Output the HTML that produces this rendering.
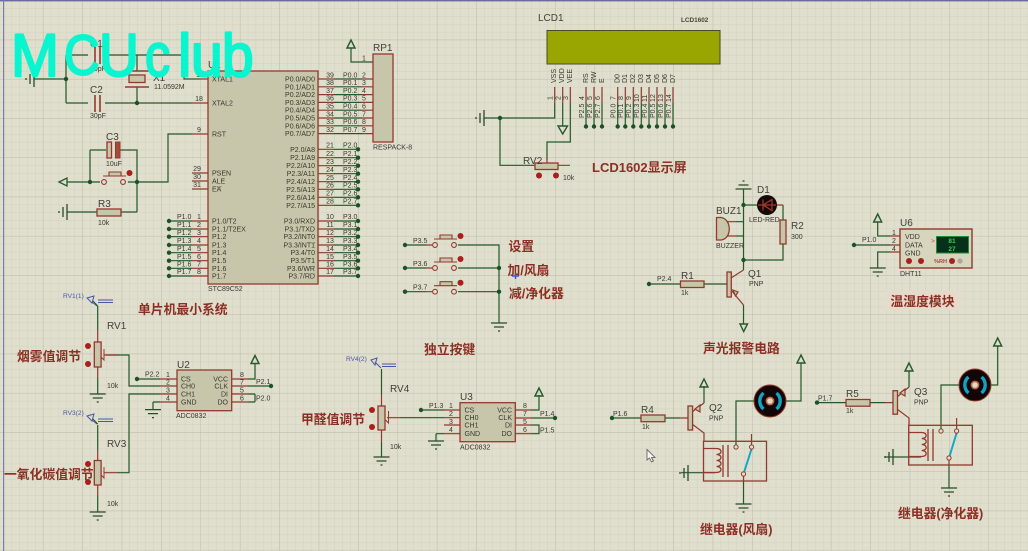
<!DOCTYPE html>
<html><head><meta charset="utf-8"><style>
html,body{margin:0;padding:0;background:#e0dfcd;overflow:hidden}
svg{display:block;filter:blur(.35px)}
text{font-family:"Liberation Sans","Noto Sans CJK SC",sans-serif}
.t{font-size:7px;fill:#38382f}
.r{font-size:10px;fill:#414138}
.m{text-anchor:middle}
.e{text-anchor:end}
.z{font-size:12.8px;font-weight:700;fill:#8c2f24}
.b{font-size:6.6px;fill:#4a55a8}
.w{fill:none;stroke:#24592a;stroke-width:1.2}
.p{fill:none;stroke:#93392e;stroke-width:1.2}
.c{fill:#c8c6aa;stroke:#93392e;stroke-width:1.3}
.k{font-family:"Liberation Sans",sans-serif;font-size:60px;fill:#08f5cf;stroke:#08f5cf;stroke-width:2.2;stroke-linejoin:round}
</style></head><body>
<svg width="1028" height="551" viewBox="0 0 1028 551" xmlns="http://www.w3.org/2000/svg">
<defs>
<pattern id="g1" width="7.88" height="7.85" patternUnits="userSpaceOnUse" x="3.5" y="0.5"><path d="M0 0V8M0 0H8" stroke="#d2d1bf" stroke-width="1" fill="none"/></pattern>
<pattern id="g2" width="39.4" height="39.25" patternUnits="userSpaceOnUse" x="3.5" y="0.4"><path d="M0 0V40M0 0H40" stroke="#bfbeac" stroke-width="1" fill="none"/></pattern>
<g id="gnd"><path d="M-8 0H8M-5 4H5M-1 8H1" stroke="#2a4a2c" stroke-width="1.3" fill="none"/></g>
<g id="gl"><path d="M0 -8V8M-4 -5V5M-8 -1V1" stroke="#2a4a2c" stroke-width="1.3" fill="none"/></g>
<circle id="d" r="2.2" fill="#1b5226"/>
<circle id="rd" r="3" fill="#a81f1c"/>
<path id="up" d="M-4 8L0 0L4 8Z" fill="none" stroke="#24592a" stroke-width="1.4"/>
<g id="mot"><circle r="16" fill="#140606" stroke="#93392e" stroke-width="1"/><path d="M-6.5 -8A10.5 10.5 0 0 0 -6.5 8M6.5 -8A10.5 10.5 0 0 1 6.5 8" fill="none" stroke="#0fa4c4" stroke-width="3.4"/><circle r="3.6" fill="#e3d9c4" stroke="#b86a4c" stroke-width="1.6"/></g>
<g id="coil"><path d="M0 0H13C19 0 19 6 13 6C19 6 19 12 13 12C19 12 19 18 13 18C19 18 19 24 13 24H0" fill="none" stroke="#93392e" stroke-width="1.3"/></g>
<g id="sw"><path d="M2 -6H25M8 -6V-10H20V-6" fill="#c8c6aa" stroke="#93392e" stroke-width="1.1"/><circle cx="3" cy="0" r="2.4" fill="#e0dfcd" stroke="#93392e" stroke-width="1.1"/><circle cx="22" cy="0" r="2.4" fill="#e0dfcd" stroke="#93392e" stroke-width="1.1"/><circle cx="28.5" cy="-9" r="3" fill="#a81f1c"/></g>
</defs>
<rect width="1028" height="551" fill="#e0dfcd"/>
<rect width="1028" height="551" fill="url(#g1)"/>
<rect width="1028" height="551" fill="url(#g2)"/>
<rect x="0" y="0" width="1028" height="1.4" fill="#6a6a9c"/>
<rect x="3" y="0" width="1.2" height="551" fill="#7c7cb0"/>

<!-- Crystal / reset -->
<path class="w" d="M34 79H66M66 55V103M66 55H88M105 55H184V79H200M66 103H88M105 103H192M137 55V71M137 87V103M90 150V182M90 150H106M120 150H137V212M67 182H100M128 182H168V134H192M67 212H97M121 212H137"/>
<path class="p" d="M200 79H208M192 103H208M192 134H208M192 173H208M192 181H208M192 189H208"/>
<path d="M95 47V64M100 47V64M95 95V112M100 95V112" stroke="#93392e" stroke-width="1.6" fill="none"/>
<path d="M125 71H149M125 87H149" stroke="#93392e" stroke-width="1.5" fill="none"/>
<rect class="c" x="129" y="75" width="16" height="7.5"/>
<rect class="c" x="107" y="142" width="4.5" height="16"/>
<rect x="115.5" y="142" width="4.5" height="16" fill="#a84a38" stroke="#93392e"/>
<path d="M59 182L67 178V186Z" fill="none" stroke="#24592a" stroke-width="1.3"/>
<use href="#gl" transform="translate(34 79)"/><use href="#gl" transform="translate(67 212)"/>
<use href="#d" x="66" y="79"/><use href="#d" x="137" y="103"/><use href="#d" x="90" y="182"/><use href="#d" x="137" y="182"/>
<use href="#sw" x="101" y="182"/>
<rect class="c" x="97" y="209" width="24" height="7"/>
<text class="r" x="90" y="47">C1</text><text class="t" x="90" y="71">30pF</text>
<text class="r" x="90" y="93">C2</text><text class="t" x="90" y="118">30pF</text>
<text class="r" x="153" y="81">X1</text><text class="t" x="154" y="89">11.0592M</text>
<text class="r" x="106" y="140">C3</text><text class="t" x="106" y="166">10uF</text>
<text class="r" x="98" y="207">R3</text><text class="t" x="98" y="225">10k</text>

<!-- U1 pins -->
<path class="p" d="M318 79H334M318 86.8H334M318 94.6H334M318 102.4H334M318 110.2H334M318 118H334M318 125.8H334M318 133.6H334M318 149.3H334M318 157.7H334M318 165.7H334M318 173.7H334M318 181.7H334M318 189.3H334M318 197.3H334M318 205.3H334M318 221H334M318 229H334M318 236.7H334M318 245H334M318 252.7H334M318 260.7H334M318 268.3H334M318 276H334M192 221H208M192 229H208M192 236.7H208M192 245H208M192 252.7H208M192 260.7H208M192 268.3H208M192 276H208M362 79H373M362 86.8H373M362 94.6H373M362 102.4H373M362 110.2H373M362 118H373M362 125.8H373M362 133.6H373"/>
<path class="w" d="M334 79H362M334 86.8H362M334 94.6H362M334 102.4H362M334 110.2H362M334 118H362M334 125.8H362M334 133.6H362M334 149.3H358M334 157.7H358M334 165.7H358M334 173.7H358M334 181.7H358M334 189.3H358M334 197.3H358M334 205.3H358M334 221H358M334 229H358M334 236.7H358M334 245H358M334 252.7H358M334 260.7H358M334 268.3H358M334 276H358M169 221H192M169 229H192M169 236.7H192M169 245H192M169 252.7H192M169 260.7H192M169 268.3H192M169 276H192M351 48V62H373"/>
<g><use href="#d" x="358" y="149.3"/><use href="#d" x="358" y="157.7"/><use href="#d" x="358" y="165.7"/><use href="#d" x="358" y="173.7"/><use href="#d" x="358" y="181.7"/><use href="#d" x="358" y="189.3"/><use href="#d" x="358" y="197.3"/><use href="#d" x="358" y="205.3"/><use href="#d" x="358" y="221"/><use href="#d" x="358" y="229"/><use href="#d" x="358" y="236.7"/><use href="#d" x="358" y="245"/><use href="#d" x="358" y="252.7"/><use href="#d" x="358" y="260.7"/><use href="#d" x="358" y="268.3"/><use href="#d" x="358" y="276"/><use href="#d" x="169" y="221"/><use href="#d" x="169" y="229"/><use href="#d" x="169" y="236.7"/><use href="#d" x="169" y="245"/><use href="#d" x="169" y="252.7"/><use href="#d" x="169" y="260.7"/><use href="#d" x="169" y="268.3"/><use href="#d" x="169" y="276"/></g>
<use href="#up" x="351" y="40"/>
<rect class="c" x="208" y="71" width="110" height="213"/>
<rect class="c" x="373" y="54" width="20" height="88"/>
<text class="r" x="208" y="68">U1</text>
<text class="r" x="373" y="51">RP1</text>
<text class="t" x="373" y="149.5">RESPACK-8</text>
<text class="t" x="208" y="291">STC89C52</text>
<g class="t">
<text class="t" x="212" y="81.5">XTAL1</text><text class="t" x="212" y="105.5">XTAL2</text><text class="t" x="212" y="136.5">RST</text>
<text class="t" x="212" y="175.5"><tspan style="text-decoration:overline">PSEN</tspan></text><text class="t" x="212" y="183.5">ALE</text><text class="t" x="212" y="191.5"><tspan style="text-decoration:overline">EA</tspan></text>
<text class="t" x="212" y="223.5">P1.0/T2</text><text class="t" x="212" y="231.5">P1.1/T2EX</text><text class="t" x="212" y="239.2">P1.2</text><text class="t" x="212" y="247.5">P1.3</text><text class="t" x="212" y="255.2">P1.4</text><text class="t" x="212" y="263.2">P1.5</text><text class="t" x="212" y="270.8">P1.6</text><text class="t" x="212" y="278.5">P1.7</text>
<text class="t e" x="315" y="81.5">P0.0/AD0</text><text class="t e" x="315" y="89.3">P0.1/AD1</text><text class="t e" x="315" y="97.1">P0.2/AD2</text><text class="t e" x="315" y="104.9">P0.3/AD3</text><text class="t e" x="315" y="112.7">P0.4/AD4</text><text class="t e" x="315" y="120.5">P0.5/AD5</text><text class="t e" x="315" y="128.3">P0.6/AD6</text><text class="t e" x="315" y="136.1">P0.7/AD7</text>
<text class="t e" x="315" y="151.8">P2.0/A8</text><text class="t e" x="315" y="160.2">P2.1/A9</text><text class="t e" x="315" y="168.2">P2.2/A10</text><text class="t e" x="315" y="176.2">P2.3/A11</text><text class="t e" x="315" y="184.2">P2.4/A12</text><text class="t e" x="315" y="191.8">P2.5/A13</text><text class="t e" x="315" y="199.8">P2.6/A14</text><text class="t e" x="315" y="207.8">P2.7/A15</text>
<text class="t e" x="315" y="223.5">P3.0/RXD</text><text class="t e" x="315" y="231.5">P3.1/TXD</text><text class="t e" x="315" y="239.2">P3.2/<tspan style="text-decoration:overline">INT0</tspan></text><text class="t e" x="315" y="247.5">P3.3/<tspan style="text-decoration:overline">INT1</tspan></text><text class="t e" x="315" y="255.2">P3.4/T0</text><text class="t e" x="315" y="263.2">P3.5/T1</text><text class="t e" x="315" y="270.8">P3.6/<tspan style="text-decoration:overline">WR</tspan></text><text class="t e" x="315" y="278.5">P3.7/<tspan style="text-decoration:overline">RD</tspan></text>
</g>
<!-- pin numbers -->
<text class="t m" x="200" y="77">19</text><text class="t m" x="199" y="101">18</text><text class="t m" x="199" y="132">9</text><text class="t m" x="197" y="171">29</text><text class="t m" x="197" y="179">30</text><text class="t m" x="197" y="187">31</text>
<text class="t m" x="199" y="219">1</text><text class="t m" x="199" y="227">2</text><text class="t m" x="199" y="235">3</text><text class="t m" x="199" y="243">4</text><text class="t m" x="199" y="251">5</text><text class="t m" x="199" y="259">6</text><text class="t m" x="199" y="266.5">7</text><text class="t m" x="199" y="274">8</text>
<text class="t" x="177" y="219">P1.0</text><text class="t" x="177" y="227">P1.1</text><text class="t" x="177" y="235">P1.2</text><text class="t" x="177" y="243">P1.3</text><text class="t" x="177" y="251">P1.4</text><text class="t" x="177" y="259">P1.5</text><text class="t" x="177" y="266.5">P1.6</text><text class="t" x="177" y="274">P1.7</text>
<text class="t m" x="330" y="77.5">39</text><text class="t m" x="330" y="85">38</text><text class="t m" x="330" y="93">37</text><text class="t m" x="330" y="100.5">36</text><text class="t m" x="330" y="108.5">35</text><text class="t m" x="330" y="116.5">34</text><text class="t m" x="330" y="124">33</text><text class="t m" x="330" y="132">32</text>
<text class="t" x="343" y="77.5">P0.0</text><text class="t" x="343" y="85">P0.1</text><text class="t" x="343" y="93">P0.2</text><text class="t" x="343" y="100.5">P0.3</text><text class="t" x="343" y="108.5">P0.4</text><text class="t" x="343" y="116.5">P0.5</text><text class="t" x="343" y="124">P0.6</text><text class="t" x="343" y="132">P0.7</text>
<text class="t m" x="364" y="60.5">1</text><text class="t m" x="364" y="77.5">2</text><text class="t m" x="364" y="85">3</text><text class="t m" x="364" y="93">4</text><text class="t m" x="364" y="100.5">5</text><text class="t m" x="364" y="108.5">6</text><text class="t m" x="364" y="116.5">7</text><text class="t m" x="364" y="124">8</text><text class="t m" x="364" y="132">9</text>
<text class="t m" x="330" y="147.5">21</text><text class="t m" x="330" y="156">22</text><text class="t m" x="330" y="164">23</text><text class="t m" x="330" y="172">24</text><text class="t m" x="330" y="180">25</text><text class="t m" x="330" y="187.5">26</text><text class="t m" x="330" y="195.5">27</text><text class="t m" x="330" y="203.5">28</text>
<text class="t" x="343" y="147.5">P2.0</text><text class="t" x="343" y="156">P2.1</text><text class="t" x="343" y="164">P2.2</text><text class="t" x="343" y="172">P2.3</text><text class="t" x="343" y="180">P2.4</text><text class="t" x="343" y="187.5">P2.5</text><text class="t" x="343" y="195.5">P2.6</text><text class="t" x="343" y="203.5">P2.7</text>
<text class="t m" x="330" y="219">10</text><text class="t m" x="330" y="227">11</text><text class="t m" x="330" y="235">12</text><text class="t m" x="330" y="243">13</text><text class="t m" x="330" y="251">14</text><text class="t m" x="330" y="259">15</text><text class="t m" x="330" y="266.5">16</text><text class="t m" x="330" y="274">17</text>
<text class="t" x="343" y="219">P3.0</text><text class="t" x="343" y="227">P3.1</text><text class="t" x="343" y="235">P3.2</text><text class="t" x="343" y="243">P3.3</text><text class="t" x="343" y="251">P3.4</text><text class="t" x="343" y="259">P3.5</text><text class="t" x="343" y="266.5">P3.6</text><text class="t" x="343" y="274">P3.7</text>

<!-- LCD -->
<rect x="547" y="30.5" width="173" height="33.5" fill="#99a500" stroke="#4a4a2c" stroke-width="1"/>
<text class="r" x="538" y="21">LCD1</text>
<text x="681" y="22" style="font-size:6.4px;font-weight:700;fill:#45453c">LCD1602</text>
<path class="p" d="M554.7 87V103M562.7 87V103M570.3 87V103M586 87V103M594 87V103M602 87V103M617.7 87V103M625.3 87V103M633.3 87V103M641.3 87V103M649 87V103M657 87V103M665 87V103M673 87V103"/>
<path class="w" d="M554.7 103V118H484M500 118V165.3H535M562.7 103V126M570.3 103V142H547V160M586 103V126.5M594 103V126.5M602 103V126.5M617.7 103V126.5M625.3 103V126.5M633.3 103V126.5M641.3 103V126.5M649 103V126.5M657 103V126.5M665 103V126.5M673 103V126.5"/>
<path class="p" d="M558 165.3H570M547 158V163"/>
<path d="M558 126H567.5L562.7 134Z" fill="none" stroke="#24592a" stroke-width="1.4"/>
<use href="#gl" transform="translate(484 118)"/><use href="#d" x="500" y="118"/>
<g><use href="#d" x="586" y="126.5"/><use href="#d" x="594" y="126.5"/><use href="#d" x="602" y="126.5"/><use href="#d" x="617.7" y="126.5"/><use href="#d" x="625.3" y="126.5"/><use href="#d" x="633.3" y="126.5"/><use href="#d" x="641.3" y="126.5"/><use href="#d" x="649" y="126.5"/><use href="#d" x="657" y="126.5"/><use href="#d" x="665" y="126.5"/><use href="#d" x="673" y="126.5"/></g>
<rect class="c" x="535" y="163" width="23" height="6.5"/>
<use href="#rd" x="539" y="175.5"/><use href="#rd" x="556" y="175.5"/>
<text class="r" x="523" y="164">RV2</text><text class="t" x="563" y="180">10k</text>
<text class="t" transform="translate(556 83) rotate(-90)">VSS</text><text class="t" transform="translate(564 83) rotate(-90)">VDD</text><text class="t" transform="translate(572 83) rotate(-90)">VEE</text><text class="t" transform="translate(588 83) rotate(-90)">RS</text><text class="t" transform="translate(596 83) rotate(-90)">RW</text><text class="t" transform="translate(604 83) rotate(-90)">E</text>
<text class="t" transform="translate(619.5 83) rotate(-90)">D0</text><text class="t" transform="translate(627 83) rotate(-90)">D1</text><text class="t" transform="translate(635 83) rotate(-90)">D2</text><text class="t" transform="translate(643 83) rotate(-90)">D3</text><text class="t" transform="translate(651 83) rotate(-90)">D4</text><text class="t" transform="translate(659 83) rotate(-90)">D5</text><text class="t" transform="translate(667 83) rotate(-90)">D6</text><text class="t" transform="translate(675 83) rotate(-90)">D7</text>
<g>
<text class="t" transform="translate(552.5 100) rotate(-90)">1</text><text class="t" transform="translate(560.5 100) rotate(-90)">2</text><text class="t" transform="translate(568 100) rotate(-90)">3</text><text class="t" transform="translate(584 100) rotate(-90)">4</text><text class="t" transform="translate(592 100) rotate(-90)">5</text><text class="t" transform="translate(600 100) rotate(-90)">6</text><text class="t" transform="translate(615.5 100) rotate(-90)">7</text><text class="t" transform="translate(623 100) rotate(-90)">8</text><text class="t" transform="translate(631 100) rotate(-90)">9</text><text class="t" transform="translate(639 102) rotate(-90)">10</text><text class="t" transform="translate(647 102) rotate(-90)">11</text><text class="t" transform="translate(655 102) rotate(-90)">12</text><text class="t" transform="translate(663 102) rotate(-90)">13</text><text class="t" transform="translate(671 102) rotate(-90)">14</text>
<text class="t" transform="translate(584 118) rotate(-90)">P2.5</text><text class="t" transform="translate(592 118) rotate(-90)">P2.6</text><text class="t" transform="translate(600 118) rotate(-90)">P2.7</text><text class="t" transform="translate(615.5 118) rotate(-90)">P0.0</text><text class="t" transform="translate(623 118) rotate(-90)">P0.1</text><text class="t" transform="translate(631 118) rotate(-90)">P0.2</text><text class="t" transform="translate(639 118) rotate(-90)">P0.3</text><text class="t" transform="translate(647 118) rotate(-90)">P0.4</text><text class="t" transform="translate(655 118) rotate(-90)">P0.5</text><text class="t" transform="translate(663 118) rotate(-90)">P0.6</text><text class="t" transform="translate(671 118) rotate(-90)">P0.7</text>
</g>
<text class="z" x="592" y="172" style="font-size:13px">LCD1602显示屏</text>

<!-- Alarm -->
<use href="#gnd" transform="translate(743.5 189) rotate(180)"/>
<path class="w" d="M743.5 189V270M743.5 205H757M736 221.7H743.5M736 236H743.5M649 284H680M704 284H727M743.5 305V324M783 205V220M783 244V260H743.5"/>
<path class="p" d="M723 221.7H736M723 236H736M777 205H783M731 278L743.5 270M731 290L743.5 305"/>
<path d="M716.5 217.5H721C732 219 732 239 721 240H716.5Z" fill="#c8c6aa" stroke="#93392e" stroke-width="1.3"/>
<circle cx="767" cy="205" r="10" fill="#150808"/>
<path d="M758 205H776M772 199.5V210.5L763 205ZM763 199.5V210.5" fill="none" stroke="#a43a2e" stroke-width="1.2"/>
<rect class="c" x="780" y="220" width="6" height="24"/>
<rect class="c" x="680.5" y="281" width="23.5" height="6.5"/>
<rect class="c" x="727" y="272" width="4.3" height="25"/>
<path d="M733 290L738 292L735.5 296Z" fill="#c8c6aa" stroke="#93392e" stroke-width="1.2"/>
<path d="M740 324H747.5L743.7 331.5Z" fill="none" stroke="#24592a" stroke-width="1.4"/>
<use href="#d" x="743.5" y="205"/><use href="#d" x="743.5" y="260"/><use href="#d" x="649" y="284"/>
<text class="r" x="757" y="193">D1</text><text class="r" x="716" y="214">BUZ1</text><text class="t" x="749" y="222">LED-RED</text><text class="t" x="716" y="248">BUZZER</text><text class="r" x="791" y="229">R2</text><text class="t" x="791" y="239">300</text><text class="t" x="657" y="281">P2.4</text><text class="r" x="681" y="279">R1</text><text class="t" x="681" y="295">1k</text><text class="r" x="748" y="277">Q1</text><text class="t" x="749" y="286">PNP</text>
<text class="z" x="703" y="353">声光报警电路</text>

<!-- DHT11 -->
<path class="w" d="M877.7 222V236H890M854 245H890M890 252H877.7V268"/>
<path class="p" d="M890 236H900M890 245H900M890 252H900"/>
<use href="#up" x="877.7" y="214"/><use href="#d" x="854" y="245"/><use href="#gnd" x="877.7" y="268"/>
<rect x="900" y="229" width="72" height="39" fill="#d7d5bd" stroke="#93392e" stroke-width="1.4"/>
<rect x="936.5" y="236.5" width="32" height="16.5" fill="#06301a" stroke="#1e8a3a" stroke-width="1"/>
<text x="952" y="243" class="m" style="font-size:6.5px;font-weight:700;fill:#35d050">81</text>
<text x="952" y="251" class="m" style="font-size:6.5px;font-weight:700;fill:#35d050">27</text>
<text x="931" y="243" style="font-size:6.5px;fill:#c05030">&gt;</text>
<use href="#rd" x="909" y="261"/><use href="#rd" x="921" y="261"/><use href="#rd" x="952" y="261"/>
<circle cx="960" cy="261" r="2.6" fill="#aaa89a"/>
<text x="934" y="263" style="font-size:5.6px;font-weight:700;fill:#a84a40">%RH</text>
<text class="t" x="905" y="239">VDD</text><text class="t" x="905" y="247.5">DATA</text><text class="t" x="905" y="255.5">GND</text><text class="t" x="892" y="235">1</text><text class="t" x="892" y="243">2</text><text class="t" x="892" y="251">4</text><text class="t" x="862" y="242">P1.0</text><text class="r" x="900" y="226">U6</text><text class="t" x="900" y="276">DHT11</text>
<rect x="886" y="291" width="75" height="19" fill="#e6dacb"/>
<text class="z" x="890.5" y="306">温湿度模块</text>

<!-- Minimal system label -->
<text class="z" x="138" y="314">单片机最小系统</text>

<!-- RV1/RV3/U2 -->
<path class="w" d="M97.7 306V330M97.7 378V394M106 355H129V386H160M97.7 425V450M97.7 496V512M118 472.7H129V394H160M137 379H160M153 402H160M153 402V409.6M248 379H255V364M248 386H271M255 394V402M248 394H255M248 402H255"/>
<path class="p" d="M97.7 330V342M97.7 367V378M97.7 450V461M97.7 485V496M160 379H177M160 386H177M160 394H177M160 402H177M232 379H248M232 386H248M232 394H248M232 402H248M104 355H118M104 472.7H118"/>
<rect class="c" x="94.3" y="342" width="6.8" height="25"/>
<rect class="c" x="94.3" y="460.5" width="6.8" height="24.5"/>
<path d="M104 349V360L101 357M104 467V478L101 475" fill="none" stroke="#93392e" stroke-width="1"/>
<use href="#rd" x="88" y="346"/><use href="#rd" x="88" y="364"/><use href="#rd" x="88" y="464"/><use href="#rd" x="88" y="482"/>
<use href="#gnd" x="97.7" y="394"/><use href="#gnd" x="97.7" y="512"/><use href="#gnd" x="153" y="409.6"/>
<use href="#up" x="255" y="355.5"/><use href="#d" x="137" y="379"/><use href="#d" x="271" y="386"/>
<path d="M87 298L94 296L92 303ZM97 306L92 302M98 300H113M98 302.5H113M87 416L94 414L92 421ZM97 424L92 420M98 419H113M98 421.5H113" fill="none" stroke="#4a55a8" stroke-width="1"/>
<path d="M97.7 306L93 301M97.7 424L93 419" stroke="#24592a" fill="none"/>
<rect class="c" x="177" y="370" width="54.7" height="40.7"/>
<text class="b" x="63" y="298">RV1(1)</text><text class="b" x="63" y="415">RV3(2)</text>
<text class="r" x="107" y="329">RV1</text><text class="t" x="107" y="388">10k</text><text class="r" x="107" y="447">RV3</text><text class="t" x="107" y="506">10k</text>
<text class="r" x="177" y="368">U2</text><text class="t" x="176" y="418">ADC0832</text>
<text class="t" x="181" y="381.5"><tspan style="text-decoration:overline">CS</tspan></text><text class="t" x="181" y="388.5">CH0</text><text class="t" x="181" y="396.5">CH1</text><text class="t" x="181" y="404.5">GND</text>
<text class="t e" x="228" y="381.5">VCC</text><text class="t e" x="228" y="388.5">CLK</text><text class="t e" x="228" y="396.5">DI</text><text class="t e" x="228" y="404.5">DO</text>
<text class="t" x="145" y="376.5">P2.2</text><text class="t" x="166" y="377">1</text><text class="t" x="166" y="384.5">2</text><text class="t" x="166" y="392.5">3</text><text class="t" x="166" y="400.5">4</text><text class="t" x="240" y="377">8</text><text class="t" x="240" y="384.5">7</text><text class="t" x="240" y="392.5">5</text><text class="t" x="240" y="400.5">6</text><text class="t" x="256" y="384">P2.1</text><text class="t" x="256" y="400.5">P2.0</text>
<text class="z" x="17" y="361">烟雾值调节</text>
<text class="z" x="4" y="479">一氧化碳值调节</text>

<!-- RV4/U3 -->
<path class="w" d="M381.5 369V394M381.5 442V457M400 417.7H444M421 410H444M436 433.7H444M436 433.7V441M531 410H539V395M531 418H555M531 425H539V433.7H531"/>
<path class="p" d="M381.5 394V406M381.5 430V442M387 417.7H400M444 410H460M444 417.7H460M444 425H460M444 433.7H460M515 410H531M515 418H531M515 425H531M515 433.7H531"/>
<rect class="c" x="378" y="406" width="7" height="24"/>
<path d="M388.5 411V423L385.5 420" fill="none" stroke="#93392e" stroke-width="1"/>
<use href="#rd" x="372" y="410"/><use href="#rd" x="372" y="427"/>
<use href="#gnd" x="381.5" y="457"/><use href="#gnd" x="436" y="441"/>
<use href="#up" x="539" y="388"/><use href="#d" x="421" y="410"/><use href="#d" x="555" y="418"/>
<path d="M371 360L377 358L375 365ZM381 368L375 362M382 364H396M382 366.5H396" fill="none" stroke="#4a55a8" stroke-width="1"/>
<rect class="c" x="460" y="402.7" width="55.3" height="39"/>
<text class="b" x="346" y="361">RV4(2)</text><text class="r" x="390" y="392">RV4</text><text class="t" x="390" y="449">10k</text><text class="r" x="460" y="400">U3</text><text class="t" x="460" y="449.5">ADC0832</text>
<text class="t" x="464.5" y="412.5"><tspan style="text-decoration:overline">CS</tspan></text><text class="t" x="464.5" y="420">CH0</text><text class="t" x="464.5" y="427.5">CH1</text><text class="t" x="464.5" y="436">GND</text>
<text class="t e" x="512" y="412.5">VCC</text><text class="t e" x="512" y="420">CLK</text><text class="t e" x="512" y="427.5">DI</text><text class="t e" x="512" y="436">DO</text>
<text class="t" x="429" y="408">P1.3</text><text class="t" x="449" y="408">1</text><text class="t" x="449" y="416">2</text><text class="t" x="449" y="424">3</text><text class="t" x="449" y="432">4</text><text class="t" x="523" y="408">8</text><text class="t" x="523" y="416">7</text><text class="t" x="523" y="424">5</text><text class="t" x="523" y="432">6</text><text class="t" x="540" y="416">P1.4</text><text class="t" x="540" y="432.5">P1.5</text>
<text class="z" x="301" y="424">甲醛值调节</text>
<text class="z" x="424" y="354">独立按键</text>

<!-- Buttons -->
<path class="w" d="M405 245H426M405 268H426M405 291.7H426M458 245H499V323M458 268H499M458 291.7H499"/>
<path class="p" d="M426 245H432M426 268H432M426 291.7H432"/>
<use href="#sw" x="432" y="245"/><use href="#sw" x="432" y="268"/><use href="#sw" x="432" y="291.7"/>
<use href="#d" x="405" y="245"/><use href="#d" x="405" y="268"/><use href="#d" x="405" y="291.7"/><use href="#d" x="499" y="268"/><use href="#d" x="499" y="291.7"/>
<use href="#gnd" x="499" y="323"/>
<text class="t" x="413" y="243">P3.5</text><text class="t" x="413" y="266">P3.6</text><text class="t" x="413" y="289.5">P3.7</text>
<text class="z" x="508.5" y="251">设置</text><text class="z" x="507.5" y="275">加/风扇</text><text class="z" x="509" y="298">减/净化器</text>
<path d="M512 276H519M515.5 273V279" stroke="#4a55c8" stroke-width="1.5" fill="none"/>

<!-- Relay 1 -->
<path class="w" d="M612 418H641M665 418H680M704 403V386M736 447V401H754M786 401H801V363M681 472.7H715M743.5 481V504"/>
<path class="p" d="M680 418H688M692 412L704 403M692 424L704 433V441M751.5 447V434M743.5 474V481"/>
<rect class="c" x="641" y="415" width="24" height="6.7"/>
<rect class="c" x="688" y="406" width="4.6" height="24"/>
<path d="M695 409L700 405L700 412Z" fill="#c8c6aa" stroke="#93392e" stroke-width="1.2"/>
<use href="#up" x="704" y="379"/><use href="#d" x="612" y="418"/>
<rect x="703.5" y="441.3" width="63" height="39.7" fill="none" stroke="#93392e" stroke-width="1.3"/>
<use href="#coil" x="703.5" y="448.5"/>
<path d="M723 445V477M728 445V477" stroke="#93392e" stroke-width="1.3" fill="none"/>
<path d="M743.5 474L751.5 449" stroke="#12a8c8" stroke-width="2"/>
<circle cx="736" cy="447" r="2.1" fill="#e0dfcd" stroke="#93392e"/><circle cx="751.6" cy="447" r="2.1" fill="#e0dfcd" stroke="#93392e"/><circle cx="743.5" cy="474" r="2.1" fill="#e0dfcd" stroke="#93392e"/>
<use href="#gl" transform="translate(688 473)"/><use href="#gnd" x="743.5" y="504"/>
<use href="#mot" x="770" y="401"/><use href="#up" x="801" y="355"/>
<text class="t" x="613" y="416">P1.6</text><text class="r" x="641" y="413">R4</text><text class="t" x="642" y="429">1k</text><text class="r" x="709" y="411">Q2</text><text class="t" x="709" y="420.5">PNP</text>
<text class="z" x="700" y="534">继电器(风扇)</text>
<path d="M647 449.5V460L649.5 458L651.5 462L653.5 461L651.5 457.5H655Z" fill="#f4f4f0" stroke="#55555a" stroke-width=".8"/>

<!-- Relay 2 -->
<path class="w" d="M817 402.6H846M870 402.6H885M909 387V371M941 431V385H959M991 385H997.7V346M885 457H921M949 465V488"/>
<path class="p" d="M885 402.6H893M897 397L909 387M897 409L909 418V425M956.6 431V418M949 458V465"/>
<rect class="c" x="846" y="399.5" width="24" height="6.7"/>
<rect class="c" x="893" y="390.7" width="4.5" height="23.5"/>
<path d="M900 393L905 389L905 396Z" fill="#c8c6aa" stroke="#93392e" stroke-width="1.2"/>
<use href="#up" x="909" y="363"/><use href="#d" x="817" y="402.6"/>
<rect x="908.7" y="425.3" width="63.6" height="39.7" fill="none" stroke="#93392e" stroke-width="1.3"/>
<use href="#coil" x="908.7" y="432.5"/>
<path d="M928 429V461M933 429V461" stroke="#93392e" stroke-width="1.3" fill="none"/>
<path d="M949 458L956.6 433" stroke="#12a8c8" stroke-width="2"/>
<circle cx="941" cy="431" r="2.1" fill="#e0dfcd" stroke="#93392e"/><circle cx="956.6" cy="431" r="2.1" fill="#e0dfcd" stroke="#93392e"/><circle cx="949" cy="458" r="2.1" fill="#e0dfcd" stroke="#93392e"/>
<use href="#gl" transform="translate(893 457)"/><use href="#gnd" x="949" y="488"/>
<use href="#mot" x="975" y="385"/><use href="#up" x="997.7" y="338"/>
<text class="t" x="818" y="400.5">P1.7</text><text class="r" x="846" y="397">R5</text><text class="t" x="846" y="413">1k</text><text class="r" x="914" y="395">Q3</text><text class="t" x="914" y="404.5">PNP</text>
<text class="z" x="898" y="518">继电器(净化器)</text>

<!-- Watermark -->
<text class="k" transform="translate(11 76) scale(.96 1)">M</text>
<text class="k" transform="translate(64 74.5) scale(.82 .95)">C</text>
<text class="k" transform="translate(99 76) scale(.92 1)">U</text>
<text class="k" transform="translate(145 76) scale(.84 1)">c</text>
<text class="k" transform="translate(178 76)">l</text>
<text class="k" transform="translate(191 76) scale(.95 1)">u</text>
<text class="k" transform="translate(222 76) scale(.95 1)">b</text>
</svg>
</body></html>
